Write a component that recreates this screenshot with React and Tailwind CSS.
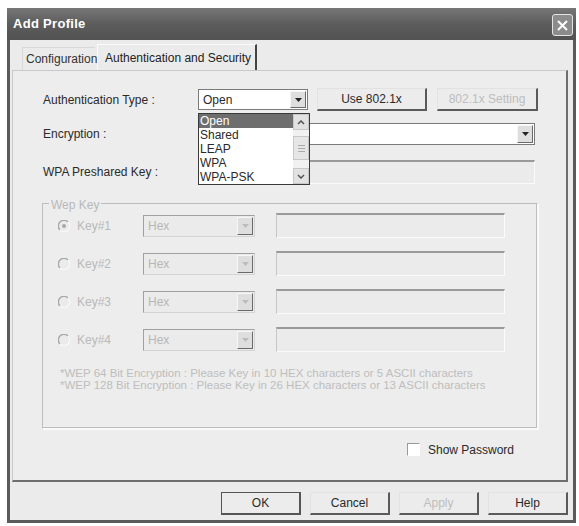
import React from 'react';

const Arrow = ({ color = '#222' }) => (
  <svg width="7" height="4" viewBox="0 0 7 4">
    <path d="M0 0h7L3.5 4z" fill={color} />
  </svg>
);

function DropBtn({ disabled }) {
  return (
    <div className="flex h-full w-[16px] items-center justify-center border border-[#f6f6f6] border-r-[#6a6a6a] border-b-[#6a6a6a] bg-[#dedede]">
      <Arrow color={disabled ? '#bcbcbc' : '#222'} />
    </div>
  );
}

function Combo({ className, value, disabled }) {
  return (
    <div
      className={`flex items-stretch p-[1px] ${
        disabled
          ? 'border border-[#d4d4d4] border-t-[#a0a0a0] border-l-[#a0a0a0] bg-[#ebebeb] text-[#b6b6b6]'
          : 'border border-[#7a7a7a] bg-white text-[#2a2a2a]'
      } ${className}`}
    >
      <div className="flex flex-1 items-center pl-[3px] text-[12px]">{value}</div>
      <DropBtn disabled={disabled} />
    </div>
  );
}

function SunkenInput({ className, white }) {
  return (
    <div
      className={`border-t-2 border-l border-b border-r border-t-[#9a9a9a] border-l-[#c6c6c6] border-b-[#fbfbfb] border-r-[#fbfbfb] ${
        white ? 'bg-white' : 'bg-[#ebebeb]'
      } ${className}`}
    />
  );
}

function Btn({ children, className, disabled, def }) {
  return (
    <div
      className={`flex h-[23px] items-center justify-center bg-[#ececec] text-[12px] ${
        def
          ? 'border border-[#555] border-r-2 border-b-2'
          : 'border border-[#e2e2e2] border-r-2 border-b-2 border-r-[#5a5a5a] border-b-[#5a5a5a]'
      } ${disabled ? 'text-[#bdbdbd]' : 'text-[#2a2a2a]'} ${className}`}
    >
      {children}
    </div>
  );
}

function Radio({ checked }) {
  return (
    <svg width="12" height="12" viewBox="0 0 12 12">
      <circle cx="6" cy="6" r="5.5" fill="#ebebeb" />
      <path d="M10 2A5.5 5.5 0 0 0 2 10" fill="none" stroke="#a8a8a8" strokeWidth="1.4" />
      <path d="M2 10A5.5 5.5 0 0 0 10 2" fill="none" stroke="#f8f8f8" strokeWidth="1.2" />
      {checked && <circle cx="6" cy="6" r="2" fill="#a8a8a8" />}
    </svg>
  );
}

function KeyRow({ n, checked }) {
  return (
    <div className="flex h-[25px] items-center">
      <div className="flex w-[85px] items-center gap-[7px]">
        <Radio checked={checked} />
        <span className="text-[12px] text-[#b8b8b8]">Key#{n}</span>
      </div>
      <Combo className="h-[22px] w-[112px]" value="Hex" disabled />
      <SunkenInput className="ml-[21px] h-[25px] w-[229px]" />
    </div>
  );
}

export default function App() {
  return (
    <div className="h-[526px] w-[579px] bg-white pl-[7px] pt-[8px] font-['Liberation_Sans',Arial,sans-serif]">
      <div className="flex h-[515px] w-[569px] flex-col bg-[#5b5b5b]">
        {/* Title bar */}
        <div className="flex h-[32px] items-center justify-between bg-gradient-to-b from-[#777] via-[#5c5c5c] to-[#525252] pl-[6px] pr-[3px]">
          <span className="text-[13px] font-bold tracking-[0.3px] text-white">Add Profile</span>
          <div className="mt-[2px] flex h-[22px] w-[21px] items-center justify-center rounded-[3px] border border-[#e4e4e4] bg-[#8c8c8c]">
            <svg width="11" height="11" viewBox="0 0 11 11">
              <path d="M1 1L10 10M10 1L1 10" stroke="#fff" strokeWidth="2" />
            </svg>
          </div>
        </div>

        {/* Body */}
        <div className="mx-[3px] mb-[3px] flex flex-1 flex-col bg-[#ebebeb] pl-[2px] pr-[5px] pt-[4px]">
          {/* Tabs */}
          <div className="flex h-[26px] items-end pl-[10px]">
            <div className="flex h-[23px] w-[73px] items-center border-l border-t border-[#d8d8d8] pl-[3px] text-[12px] text-[#333]">
              Configuration
            </div>
            <div className="ml-[2px] flex h-[26px] w-[160px] items-center border-l border-t border-[#fafafa] border-r-2 border-r-[#444] pl-[7px] text-[12px] text-[#222]">
              Authentication and Security
            </div>
          </div>

          {/* Panel */}
          <div className="relative flex h-[412px] flex-col border border-[#c9c9c9] border-r-2 border-b-2 border-r-[#6e6e6e] border-b-[#6e6e6e] bg-[#ededed] pl-[30px] pt-[17px]">
            {/* Row 1 */}
            <div className="flex h-[23px] items-center">
              <span className="w-[155px] text-[12px] text-[#2a2a2a]">Authentication Type :</span>
              <Combo className="h-[21px] w-[110px]" value="Open" />
              <Btn className="ml-[9px] w-[110px]">Use 802.1x</Btn>
              <Btn className="ml-[10px] w-[101px]" disabled>
                802.1x Setting
              </Btn>
            </div>
            {/* Row 2 */}
            <div className="mt-[12px] flex h-[22px] items-center">
              <span className="w-[155px] text-[12px] text-[#2a2a2a]">Encryption :</span>
              <Combo className="h-[22px] w-[337px]" value="" />
            </div>
            {/* Row 3 */}
            <div className="mt-[15px] flex h-[24px] items-center">
              <span className="w-[155px] text-[12px] text-[#2a2a2a]">WPA Preshared Key :</span>
              <SunkenInput className="h-[24px] w-[337px]" />
            </div>

            {/* Wep Key group */}
            <div className="relative ml-[-1px] mt-[19px] flex h-[226px] w-[496px] flex-col border border-[#bdbdbd] border-r-[#fafafa] border-b-[#fafafa] shadow-[inset_-1px_-1px_0_#bdbdbd,1px_1px_0_#fafafa] pl-[15px] pt-[9px]">
              <span className="absolute left-[6px] top-[-8px] bg-[#ededed] px-[2px] text-[12px] text-[#b8b8b8]">
                Wep Key
              </span>
              <div className="flex flex-col gap-[13px]">
                <KeyRow n={1} checked />
                <KeyRow n={2} />
                <KeyRow n={3} />
                <KeyRow n={4} />
              </div>
              <div className="mt-[15px] pl-[2px] text-[11.5px] leading-[12px] text-[#bdbdbd]">
                <div>*WEP 64 Bit Encryption : Please Key in 10 HEX characters or 5 ASCII characters</div>
                <div>*WEP 128 Bit Encryption : Please Key in 26 HEX characters or 13 ASCII characters</div>
              </div>
            </div>

            {/* Show password */}
            <div className="ml-[364px] mt-[14px] flex h-[13px] items-center gap-[8px]">
              <div className="h-[13px] w-[13px] border border-[#9a9a9a] border-r-[#fff] border-b-[#fff] bg-white" />
              <span className="text-[12px] text-[#2a2a2a]">Show Password</span>
            </div>

            {/* Dropdown list (open) */}
            <div className="absolute left-[185px] top-[42px] flex h-[72px] w-[112px] border border-[#3a3a3a] bg-white">
              <div className="flex flex-1 flex-col text-[12px] leading-[14px] text-[#2a2a2a]">
                <div className="bg-[#6e6e6e] pl-[1px] text-white">Open</div>
                <div className="pl-[1px]">Shared</div>
                <div className="pl-[1px]">LEAP</div>
                <div className="pl-[1px]">WPA</div>
                <div className="pl-[1px]">WPA-PSK</div>
              </div>
              <div className="flex w-[16px] flex-col bg-[#f1f1f1]">
                <div className="flex h-[16px] items-center justify-center border border-[#c8c8c8] bg-[#e2e2e2]">
                  <svg width="8" height="5" viewBox="0 0 8 5">
                    <path d="M1 4L4 1L7 4" fill="none" stroke="#555" strokeWidth="1.5" />
                  </svg>
                </div>
                <div className="mt-[6px] flex h-[24px] flex-col items-center justify-center gap-[2px] border border-[#c8c8c8] bg-[#e6e6e6]">
                  <div className="h-px w-[7px] bg-[#aaa]" />
                  <div className="h-px w-[7px] bg-[#aaa]" />
                  <div className="h-px w-[7px] bg-[#aaa]" />
                </div>
                <div className="flex-1" />
                <div className="flex h-[16px] items-center justify-center border border-[#c8c8c8] bg-[#e2e2e2]">
                  <svg width="8" height="5" viewBox="0 0 8 5">
                    <path d="M1 1L4 4L7 1" fill="none" stroke="#555" strokeWidth="1.5" />
                  </svg>
                </div>
              </div>
            </div>
          </div>

          {/* Buttons */}
          <div className="mt-[10px] flex justify-end gap-[9px]">
            <Btn def className="w-[80px]">OK</Btn>
            <Btn className="w-[80px]">Cancel</Btn>
            <Btn disabled className="w-[80px]">Apply</Btn>
            <Btn className="w-[80px]">Help</Btn>
          </div>
        </div>
      </div>
    </div>
  );
}
